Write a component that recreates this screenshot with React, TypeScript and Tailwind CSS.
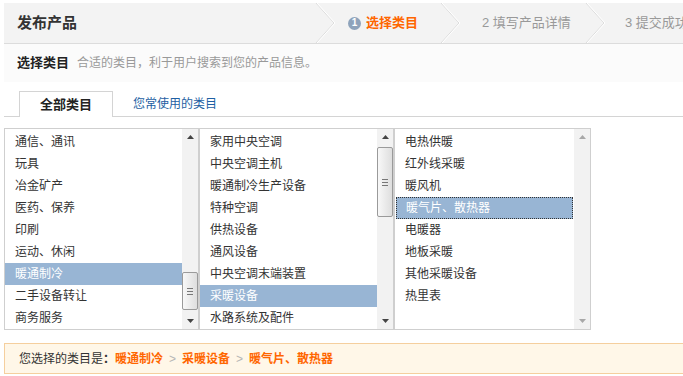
import React from "react";

const FONT = { fontFamily: '"Liberation Sans", "Noto Sans CJK SC", sans-serif' };

type Col = {
  items: string[];
  selected: number;
  focus?: boolean;
  thumb?: { top: number; height: number };
  width: string;
};

const COLS: Col[] = [
  {
    items: ["通信、通讯", "玩具", "冶金矿产", "医药、保养", "印刷", "运动、休闲", "暖通制冷", "二手设备转让", "商务服务"],
    selected: 6,
    thumb: { top: 143, height: 38 },
    width: "w-[195px]",
  },
  {
    items: ["家用中央空调", "中央空调主机", "暖通制冷生产设备", "特种空调", "供热设备", "通风设备", "中央空调末端装置", "采暖设备", "水路系统及配件"],
    selected: 7,
    thumb: { top: 18, height: 70 },
    width: "w-[195px]",
  },
  {
    items: ["电热供暖", "红外线采暖", "暖风机", "暖气片、散热器", "电暖器", "地板采暖", "其他采暖设备", "热里表"],
    selected: 3,
    focus: true,
    width: "w-[197px]",
  },
];

function Arrow({ up, disabled }: { up?: boolean; disabled?: boolean }) {
  return (
    <div className="flex h-[16px] items-center justify-center">
      <svg width="7" height="4" viewBox="0 0 7 4">
        <path d={up ? "M0 4 L3.5 0 L7 4 Z" : "M0 0 L3.5 4 L7 0 Z"} fill={disabled ? "#a8a8a8" : "#444"} />
      </svg>
    </div>
  );
}

function Scrollbar({ thumb }: { thumb?: { top: number; height: number } }) {
  return (
    <div className="relative flex w-[16px] shrink-0 flex-col justify-between bg-[#f2f2f2]">
      <Arrow up disabled={!thumb} />
      {thumb && (
        <div
          className="absolute left-[0px] right-[0px] flex items-center justify-center rounded-[2px] border border-[#9a9a9a] bg-gradient-to-r from-[#f8f8f8] to-[#dedede]"
          style={{ top: thumb.top, height: thumb.height }}
        >
          <div className="flex flex-col gap-[2px]">
            <div className="h-px w-[6px] bg-[#777]" />
            <div className="h-px w-[6px] bg-[#777]" />
            <div className="h-px w-[6px] bg-[#777]" />
          </div>
        </div>
      )}
      <Arrow disabled={!thumb} />
    </div>
  );
}

function ListBox({ col }: { col: Col }) {
  return (
    <div className={`flex h-[202px] ${col.width} shrink-0 border border-[#cfcfcf] bg-white`}>
      <div className="flex-1 overflow-hidden pt-[2px]">
        {col.items.map((it, i) => {
          const sel = i === col.selected;
          return (
            <div
              key={it}
              className={
                sel
                  ? `h-[22px] pl-[9px] leading-[20px] text-white bg-[#98b5d4] ${col.focus ? "mx-[1px] border border-dotted border-[#333] pl-[8px]" : "border border-transparent"}`
                  : "h-[22px] border border-transparent pl-[9px] leading-[20px] text-[#333]"
              }
            >
              {it}
            </div>
          );
        })}
      </div>
      <Scrollbar thumb={col.thumb} />
    </div>
  );
}

function Chevron() {
  return (
    <svg width="22" height="40" viewBox="0 0 22 40" className="shrink-0">
      <path d="M1 0 L19 20 L1 40" fill="none" stroke="#dcdcdc" strokeWidth="1" />
      <path d="M2 0 L20 20 L2 40" fill="none" stroke="#ffffff" strokeWidth="1" />
    </svg>
  );
}

export default function App() {
  return (
    <div className="h-[376px] w-[683px] overflow-hidden bg-white text-[12px]" style={FONT}>
      <div className="w-[740px] pl-[4px] pt-[3px]">
        {/* Header */}
        <div className="flex h-[41px] items-center border-b border-[#dcdcdc] bg-[#f3f3f3]">
          <div className="w-[311px] shrink-0 pl-[13px] text-[15px] font-bold text-[#333]">发布产品</div>
          <Chevron />
          <div className="flex w-[103px] shrink-0 items-center gap-[5px] pl-[11px]">
            <span className="flex h-[13px] w-[13px] items-center justify-center rounded-full bg-[#8ea3bb] text-[10px] font-bold leading-none text-white">1</span>
            <span className="text-[13px] font-bold text-[#f60]">选择类目</span>
          </div>
          <Chevron />
          <div className="w-[123px] shrink-0 pl-[20px] text-[13px] text-[#999]">2 填写产品详情</div>
          <Chevron />
          <div className="shrink-0 pl-[18px] text-[13px] text-[#999]">3 提交成功</div>
        </div>

        {/* Sub header */}
        <div className="flex h-[38px] items-center bg-[#fbfbfb] pl-[13px]">
          <span className="text-[13px] font-bold text-[#222]">选择类目</span>
          <span className="ml-[8px] text-[12px] text-[#999]">合适的类目，利于用户搜索到您的产品信息。</span>
        </div>

        {/* Tabs */}
        <div className="mt-[9px] flex h-[26px] items-end border-b border-[#d4d4d4]">
          <div className="-mb-px ml-[15px] flex h-[26px] w-[94px] items-center justify-center border border-b-0 border-[#d4d4d4] bg-white text-[13px] font-bold text-[#222]">
            全部类目
          </div>
          <div className="flex h-[25px] items-center pl-[20px] text-[12px] text-[#1e5fa3]">您常使用的类目</div>
        </div>

        {/* Lists */}
        <div className="mt-[11px] flex">
          {COLS.map((c, i) => (
            <ListBox key={i} col={c} />
          ))}
        </div>

        {/* Selection */}
        <div className="mt-[13px] flex h-[31px] items-center border border-[#f5cf9e] bg-[#fff7e8] pl-[14px] text-[12px]">
          <span className="text-[#333]">您选择的类目是<b>：</b></span>
          <b className="text-[#f60]">暖通制冷</b>
          <span className="mx-[6px] text-[#b5b5b5]">&gt;</span>
          <b className="text-[#f60]">采暖设备</b>
          <span className="mx-[6px] text-[#b5b5b5]">&gt;</span>
          <b className="text-[#f60]">暖气片、散热器</b>
        </div>
      </div>
    </div>
  );
}
